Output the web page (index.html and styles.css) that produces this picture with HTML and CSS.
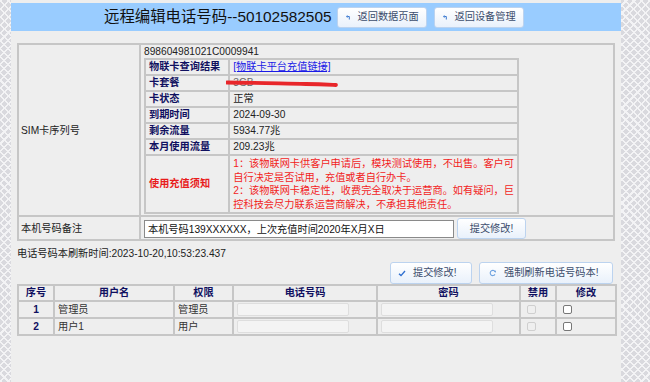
FILE: index.html
```html
<!DOCTYPE html>
<html lang="zh-CN">
<head>
<meta charset="utf-8">
<title>远程编辑电话号码</title>
<link rel="stylesheet" href="styles.css">
</head>
<body>
<div class="page">
  <div class="header">
    <h1 class="title">远程编辑电话号码--50102582505</h1>
    <button class="btn btn-head"><svg class="ico" viewBox="0 0 6 6" width="6" height="6"><path d="M1 2.5 L2.6 1 L2.6 4 Z" fill="#3a78d0"/><path d="M2.4 2.5 H4.3 V5.5" fill="none" stroke="#3a78d0" stroke-width="1"/></svg>返回数据页面</button>
    <button class="btn btn-head"><svg class="ico" viewBox="0 0 6 6" width="6" height="6"><path d="M1 2.5 L2.6 1 L2.6 4 Z" fill="#3a78d0"/><path d="M2.4 2.5 H4.3 V5.5" fill="none" stroke="#3a78d0" stroke-width="1"/></svg>返回设备管理</button>
  </div>

  <table class="main">
    <tr>
      <td class="main-lbl">SIM卡序列号</td>
      <td class="main-val">
        <div class="serial">898604981021C0009941</div>
        <table class="info">
          <tr><th>物联卡查询结果</th><td><a class="link" href="#">[物联卡平台充值链接]</a></td></tr>
          <tr><th>卡套餐</th><td class="pkg"><span class="muted">3GB</span><svg class="scribble" viewBox="0 0 112 8" width="112" height="8"><path d="M1 2.5 C 20 2.6, 50 3.4, 80 4 C 95 4.3, 105 4.8, 110 5" fill="none" stroke="#e8262a" stroke-width="3.8" stroke-linecap="round"/></svg></td></tr>
          <tr><th>卡状态</th><td>正常</td></tr>
          <tr><th>到期时间</th><td>2024-09-30</td></tr>
          <tr><th>剩余流量</th><td>5934.77兆</td></tr>
          <tr><th>本月使用流量</th><td>209.23兆</td></tr>
          <tr><th class="warn-lbl">使用充值须知</th><td class="notice">1：该物联网卡供客户申请后，模块测试使用，不出售。客户可<br>自行决定是否试用，充值或者自行办卡。<br>2：该物联网卡稳定性，收费完全取决于运营商。如有疑问，巨<br>控科技会尽力联系运营商解决，不承担其他责任。</td></tr>
        </table>
      </td>
    </tr>
    <tr>
      <td class="main-lbl">本机号码备注</td>
      <td class="main-val remark">
        <div class="remark-row">
          <input class="remark-input" type="text" value="本机号码139XXXXXX，上次充值时间2020年X月X日">
          <button class="btn btn-remark">提交修改!</button>
        </div>
      </td>
    </tr>
  </table>

  <div class="stamp">电话号码本刷新时间:2023-10-20,10:53:23.437</div>

  <div class="actions">
    <button class="btn btn-submit"><svg class="ico" viewBox="0 0 8 7" width="8" height="7"><path d="M1 3.8 L3 5.6 L7 1" fill="none" stroke="#2f6fd0" stroke-width="1.4"/></svg>提交修改!</button>
    <button class="btn btn-refresh"><svg class="ico" viewBox="0 0 8 8" width="8" height="8"><path d="M6.3 3.2 A2.6 2.6 0 1 0 6 5.4" fill="none" stroke="#6fa3e0" stroke-width="1.1"/><path d="M5 2.2 L7 1.6 L6.8 3.8 Z" fill="#6fa3e0"/></svg>强制刷新电话号码本!</button>
  </div>

  <table class="users">
    <colgroup>
      <col class="c-no"><col class="c-name"><col class="c-role"><col class="c-phone"><col class="c-pwd"><col class="c-dis"><col class="c-mod">
    </colgroup>
    <tr><th>序号</th><th>用户名</th><th>权限</th><th>电话号码</th><th>密码</th><th>禁用</th><th>修改</th></tr>
    <tr>
      <td class="num">1</td><td>管理员</td><td>管理员</td>
      <td><input class="uinput" type="text"></td>
      <td><input class="uinput" type="password"></td>
      <td><input class="cb" type="checkbox" disabled></td>
      <td><input class="cb" type="checkbox"></td>
    </tr>
    <tr>
      <td class="num">2</td><td>用户1</td><td>用户</td>
      <td><input class="uinput" type="text"></td>
      <td><input class="uinput" type="password"></td>
      <td><input class="cb" type="checkbox" disabled></td>
      <td><input class="cb" type="checkbox"></td>
    </tr>
  </table>
</div>
</body>
</html>
```

FILE: styles.css
```css
html, body {
  margin: 0;
  padding: 0;
}

body {
  width: 650px;
  height: 382px;
  overflow: hidden;
  background-color: #d9d9de;
  background-image:
    repeating-linear-gradient(45deg, #f3f3f5 0 1.5px, transparent 1.5px 5.6px),
    repeating-linear-gradient(-45deg, #f3f3f5 0 1.5px, transparent 1.5px 5.6px);
  font-family: "Liberation Sans", "Noto Sans CJK SC", sans-serif;
  font-size: 10.2px;
  color: #222;
}

.page {
  margin-left: 11px;
  width: 610px;
  height: 382px;
  padding-top: 3px;
  box-sizing: border-box;
  background: #eeeeee;
}

/* header */
.header {
  height: 28px;
  background: #99ccff;
  display: flex;
  align-items: center;
  padding-left: 93px;
}

.title {
  margin: 0 5px 0 0;
  font-size: 15.4px;
  font-weight: normal;
  color: #111;
  line-height: 28px;
  white-space: nowrap;
}

.btn {
  display: inline-flex;
  align-items: center;
  box-sizing: border-box;
  height: 21px;
  padding: 0 0 0 7px;
  border: 1px solid #bcd3ef;
  border-radius: 3px;
  background: linear-gradient(#ffffff, #e9f1fb);
  color: #3c4d6c;
  font-family: inherit;
  font-size: 10.2px;
  line-height: 12px;
  white-space: nowrap;
}

.ico {
  flex: none;
  margin-right: 7px;
}

.btn-head {
  width: 90px;
  margin-right: 7px;
}

/* main table */
.main {
  margin: 12px 0 0 6px;
  width: 598px;
  border-collapse: collapse;
  border: 2px solid #c6c6c6;
}

.main > tbody > tr > td {
  border: 2px solid #c6c6c6;
}

.main-lbl {
  width: 116px;
  padding: 0 2px;
  line-height: 13px;
  color: #222;
  vertical-align: middle;
}

.main-val {
  padding: 0 2px 1px 3px;
  vertical-align: top;
}

.serial {
  padding-top: 1px;
  line-height: 12px;
}

.info {
  width: 375px;
  border-collapse: collapse;
  border: 2px solid #c6c6c6;
}

.info th,
.info td {
  border: 2px solid #c6c6c6;
  padding: 0 3px;
  line-height: 14px;
  text-align: left;
  vertical-align: middle;
}

.info th {
  width: 80px;
  font-weight: bold;
  color: #101060;
}

.info td {
  color: #222;
}

.link {
  color: #1a1ae6;
  text-decoration: underline;
}

.pkg {
  position: relative;
}

.muted {
  color: #666;
}

.scribble {
  position: absolute;
  left: -4px;
  top: 4px;
}

.info th.warn-lbl {
  color: #e81c1c;
}

.info td.notice {
  color: #f21d1d;
  line-height: 13.6px;
  padding: 1px 3px;
  white-space: nowrap;
}

.main > tbody > tr > td.remark {
  padding: 1px 2px 0 3px;
  vertical-align: middle;
}

.remark-row {
  display: flex;
  align-items: center;
  gap: 3px;
}

.remark-input {
  box-sizing: border-box;
  width: 310px;
  height: 18px;
  margin: 0;
  padding: 0 3px;
  border: 1px solid #8a8a8a;
  background: #fff;
  font-family: inherit;
  font-size: 10.2px;
  color: #111;
}

.btn-remark {
  width: 69px;
  justify-content: center;
  padding: 0;
}

/* stamp + actions */
.stamp {
  margin: 7px 0 0 6px;
  line-height: 12px;
  color: #222;
}

.actions {
  display: flex;
  justify-content: flex-end;
  gap: 7px;
  margin-top: 2px;
  padding-right: 8px;
}

.btn-submit {
  width: 82px;
  height: 22px;
}

.btn-refresh {
  width: 134px;
  height: 22px;
  padding-left: 9px;
}

/* users table */
.users {
  margin: 0 0 0 6px;
  width: 598px;
  border-collapse: collapse;
  border: 2px solid #c6c6c6;
  table-layout: fixed;
}

.c-no { width: 36px; }
.c-name { width: 120px; }
.c-role { width: 59px; }
.c-phone { width: 144px; }
.c-pwd { width: 143px; }
.c-dis { width: 36px; }
.c-mod { width: 60px; }

.users th,
.users td {
  border: 2px solid #c6c6c6;
  padding: 0 3px;
  text-align: left;
  vertical-align: middle;
}

.users th {
  height: 14px;
  line-height: 14px;
  text-align: center;
  font-weight: bold;
  color: #101060;
}

.users td {
  height: 15px;
  line-height: 13px;
  color: #333;
}

.users td.num {
  text-align: center;
  font-weight: bold;
  color: #101060;
}

.uinput {
  display: block;
  box-sizing: border-box;
  width: 112px;
  height: 13px;
  margin: 0;
  padding: 0;
  border: 1px solid #dedede;
  border-radius: 2px;
  background: #f4f4f4;
}

.cb {
  appearance: none;
  display: block;
  box-sizing: border-box;
  width: 9px;
  height: 9px;
  margin: 0 0 0 3px;
  border: 1px solid #777;
  border-radius: 2px;
  background: #fff;
}

.cb:disabled {
  border-color: #cfcfcf;
  background: #efefef;
}
```
